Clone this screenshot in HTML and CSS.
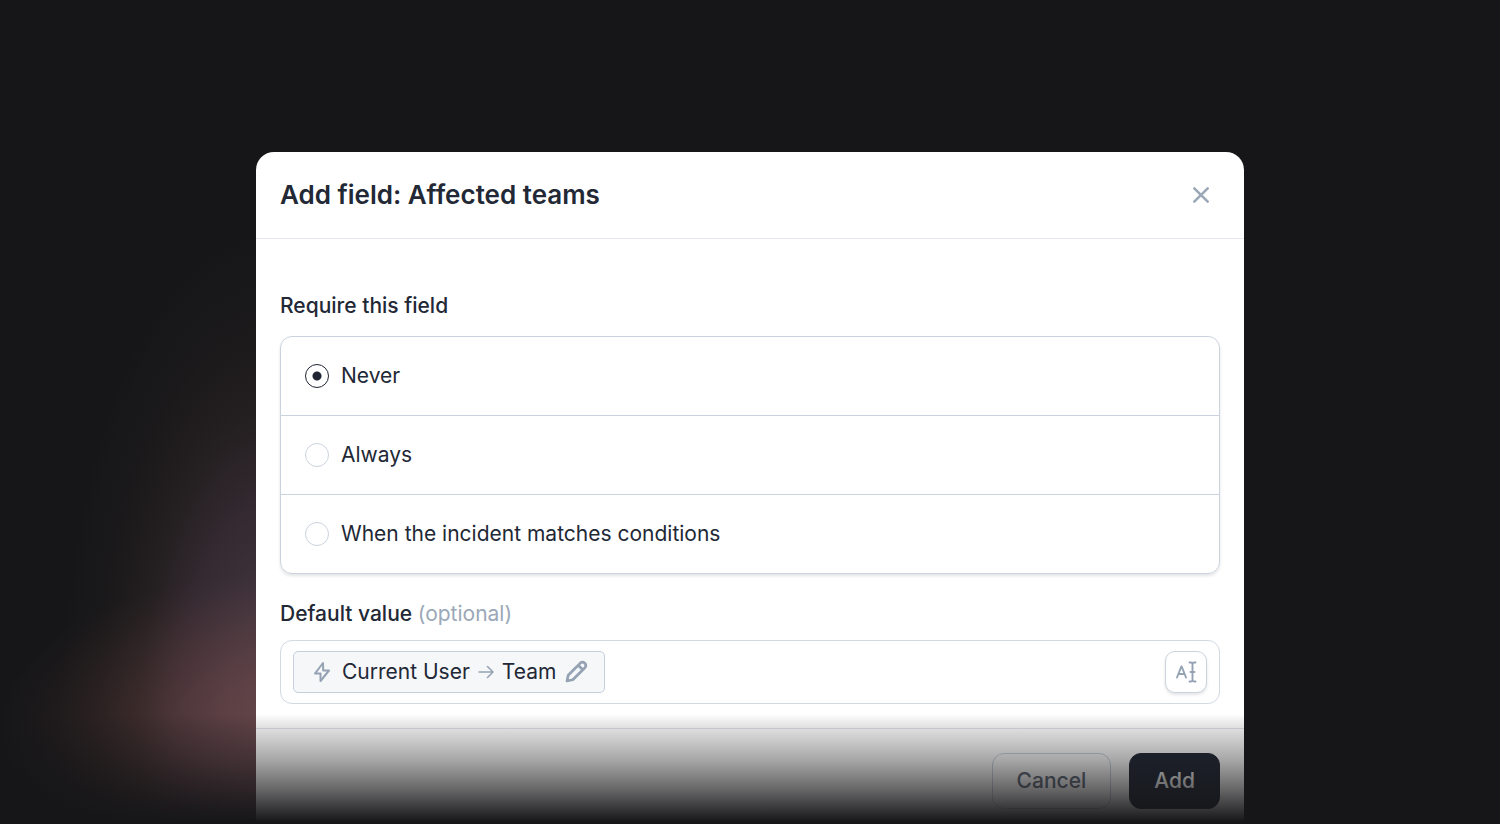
FILE: index.html
```
<!DOCTYPE html>
<html lang="en">
<head>
<meta charset="utf-8">
<title>Add field: Affected teams</title>
<link rel="stylesheet" href="styles.css">
</head>
<body>
<main class="stage">
  <form class="modal" role="dialog" aria-labelledby="modal-title">
    <header class="modal-header">
      <h1 class="modal-title" id="modal-title">Add field: Affected teams</h1>
      <button class="close" type="button" aria-label="Close">
        <svg width="38" height="38" viewBox="0 0 38 38" fill="none" stroke="currentColor" stroke-width="2.600" stroke-linecap="round"><path d="M12.300 12.300 25.700 25.700M25.700 12.300 12.300 25.700"/></svg>
      </button>
    </header>
    <div class="modal-body">
      <fieldset class="require">
        <legend class="label">Require this field</legend>
        <div class="options">
          <label class="option"><input class="radio" type="radio" name="require" checked>Never</label>
          <label class="option"><input class="radio" type="radio" name="require">Always</label>
          <label class="option"><input class="radio" type="radio" name="require">When the incident matches conditions</label>
        </div>
      </fieldset>
      <section class="default" aria-labelledby="default-label">
        <h2 class="label" id="default-label">Default value <span class="optional">(optional)</span></h2>
        <div class="field">
          <button class="chip" type="button">
            <svg width="24" height="24" viewBox="0 0 24 24" fill="none" stroke="currentColor" stroke-width="2" stroke-linejoin="round"><path d="M13 3 5 13.500H10.500L10.500 21 19 10.500H13.200Z"/></svg>
            <span>Current User</span>
            <svg width="16" height="16" viewBox="0 0 16 16" fill="none" stroke="currentColor" stroke-width="1.500" stroke-linecap="round" stroke-linejoin="round"><path d="M1 8H15M9.500 2.500 15 8 9.500 13.500"/></svg>
            <span>Team</span>
            <svg width="24" height="24" viewBox="0 0 24 24" fill="none" stroke="currentColor" stroke-width="2.700" stroke-linecap="round" stroke-linejoin="round"><path d="M3 21 4.200 15.200 16.300 3.100Q18.500 1.200 20.800 3.200 22.800 5.500 20.900 7.700L8.800 19.800ZM14.200 5.200 18.800 9.800"/></svg>
          </button>
          <button class="mode" type="button" aria-label="Enter text">
            <svg width="24" height="24" viewBox="0 0 24 24" fill="none" stroke="currentColor" stroke-width="1.900" stroke-linecap="round" stroke-linejoin="round"><path d="M3 17.500 7.300 6.500H7.700L12 17.500M4.500 14H10.500M15.500 2.500H17Q18.500 2.500 18.500 4V20Q18.500 21.500 17 21.500H15.500M21.500 2.500H20Q18.500 2.500 18.500 4M18.500 20Q18.500 21.500 20 21.500H21.500M16.500 12H20.500"/></svg>
          </button>
        </div>
      </section>
    </div>
    <footer class="modal-footer">
      <button class="button" type="button">Cancel</button>
      <button class="button button-primary" type="submit">Add</button>
    </footer>
  </form>
  <div class="fade"></div>
</main>
</body>
</html>
```
FILE: styles.css
```
* {
  box-sizing: border-box;
}

body {
  margin: 0;
  background: #161618;
  color: #222835;
  font-family: Inter, "Liberation Sans", sans-serif;
  font-size: 21px;
  line-height: 28px;
}

button {
  margin: 0;
  font: inherit;
  color: inherit;
}

svg {
  display: block;
}

.stage {
  position: relative;
  height: 100vh;
  overflow: hidden;
  padding-top: 152px;
  background:
    radial-gradient(ellipse 270px 150px at 18% 88%, rgba(170, 100, 90, 0.29), rgba(170, 100, 90, 0.22) 36%, rgba(170, 100, 90, 0.1) 68%, rgba(170, 100, 90, 0.03) 88%, transparent),
    radial-gradient(ellipse 210px 500px at 18% 88%, rgba(150, 110, 130, 0.4), rgba(150, 110, 132, 0.34) 22%, rgba(150, 105, 130, 0.23) 44%, rgba(150, 105, 105, 0.11) 62%, rgba(150, 105, 90, 0.04) 80%, transparent),
    #161618;
}

.modal {
  width: calc(66% - 2px);
  margin: 0 auto;
  background: #fff;
  border-radius: 18px 18px 0 0;
}

.modal-header {
  display: flex;
  align-items: center;
  justify-content: space-between;
  padding: 24px;
  border-bottom: 1px solid #e5e9ee;
}

.modal-title {
  margin: 0;
  font-size: 26px;
  font-weight: 600;
  line-height: 38px;
}

.close {
  padding: 0;
  border: 0;
  background: none;
  color: #9ba8b7;
}

.modal-body {
  padding: 53px 24px 24px;
}

.require {
  margin: 0;
  padding: 0;
  border: 0;
}

.label {
  margin: 0;
  padding: 0;
  font-size: 21px;
  font-weight: 500;
}

.optional {
  color: #9ba8b7;
  font-weight: 400;
}

.options {
  margin-top: 16px;
  border: 1px solid #cbd3de;
  border-radius: 12px;
  box-shadow: 0 2px 3px rgba(30, 40, 60, 0.12);
}

.option {
  display: flex;
  align-items: center;
  gap: 12px;
  padding: 25px 24px;
}

.option + .option {
  border-top: 1px solid #cbd3de;
}

.radio {
  appearance: none;
  width: 24px;
  height: 24px;
  margin: 0;
  border: 1px solid #cbd3de;
  border-radius: 50%;
}

.radio:checked {
  border-color: #1f2532;
  background: radial-gradient(circle, #1f2532 4px, transparent 5px);
}

.default {
  margin-top: 26px;
}

.field {
  display: flex;
  align-items: center;
  justify-content: space-between;
  margin-top: 12px;
  padding: 10px 12px;
  border: 1px solid #d2d9e3;
  border-radius: 12px;
}

.chip {
  display: flex;
  align-items: center;
  gap: 8px;
  padding: 6px 16px;
  border: 1px solid #c5cfdd;
  border-radius: 5px;
  background: #f6f7f9;
}

.chip svg,
.mode {
  color: #94a2b3;
}

.mode {
  padding: 8px;
  border: 1px solid #cbd3de;
  border-radius: 10px;
  background: #fff;
  box-shadow: 0 2px 3px rgba(30, 40, 60, 0.12);
}

.modal-footer {
  display: flex;
  justify-content: flex-end;
  gap: 18px;
  padding: 24px 24px 48px;
  border-top: 1px solid #dfe3e9;
}

.button {
  padding: 13px 24px;
  border: 1px solid #cbd3de;
  border-radius: 12px;
  background: #fff;
  color: #5f6876;
  font-weight: 500;
}

.button-primary {
  border-color: #1f2532;
  background: #1f2532;
  color: #fff;
}

.fade {
  position: absolute;
  inset: auto 0 0;
  height: 110px;
  background: linear-gradient(transparent, rgba(22, 22, 24, 0.12) 11%, rgba(22, 22, 24, 0.38) 42%, rgba(22, 22, 24, 0.67) 70%, #161618 98%);
  pointer-events: none;
}
```
